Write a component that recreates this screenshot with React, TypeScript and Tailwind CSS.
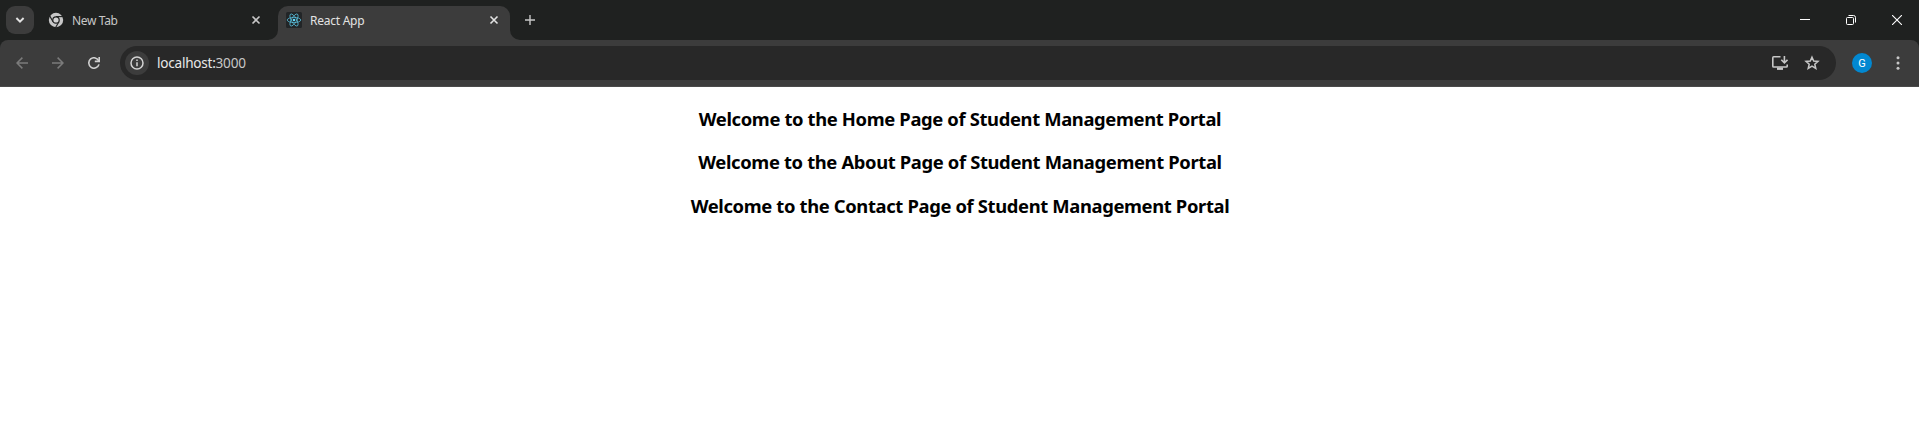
import React from "react";

type IconProps = { className?: string };

const CloseIcon = ({ className }: IconProps) => (
  <svg className={className} width="10" height="10" viewBox="0 0 10 10" fill="none" stroke="currentColor" strokeWidth="1.6">
    <path d="M1.5 1.5l7 7M8.5 1.5l-7 7" />
  </svg>
);

const ChromeIcon = () => (
  <svg width="16" height="16" viewBox="0 0 16 16">
    <circle cx="8" cy="8" r="7.2" fill="#c7c7c7" />
    <circle cx="8" cy="8" r="3.8" fill="#1f2120" />
    <g stroke="#1f2120" strokeWidth="1.1">
      <path d="M8 4.6h7" />
      <path d="M10.95 9.7L7.45 15.76" />
      <path d="M5.05 9.7L1.55 3.64" />
    </g>
    <circle cx="8" cy="8" r="2.6" fill="#d3d3d3" />
  </svg>
);

const ReactIcon = () => (
  <svg width="16" height="16" viewBox="0 0 16 16">
    <rect width="16" height="16" rx="1.5" fill="#222527" />
    <g fill="none" stroke="#58bfdc" strokeWidth="0.75">
      <ellipse cx="8" cy="8" rx="6.8" ry="2.6" />
      <ellipse cx="8" cy="8" rx="6.8" ry="2.6" transform="rotate(60 8 8)" />
      <ellipse cx="8" cy="8" rx="6.8" ry="2.6" transform="rotate(120 8 8)" />
    </g>
    <circle cx="8" cy="8" r="1.3" fill="#61dafb" />
  </svg>
);

const Arrow = ({ className }: IconProps) => (
  <svg className={className} width="12" height="12" viewBox="0 0 12 12" fill="none" stroke="#7b7b7b" strokeWidth="1.5">
    <path d="M12 6H1.2M6.4 0.6L1 6L6.4 11.4" />
  </svg>
);

const ReloadIcon = () => (
  <svg width="12" height="12" viewBox="0 0 12 12" fill="none" stroke="#d0d0d0" strokeWidth="1.6">
    <path d="M10.8 4A5.2 5.2 0 1 0 11 7.4" />
    <path d="M11.2 0V4.4H6.8" />
  </svg>
);

const TabCurve = ({ className }: IconProps) => (
  <svg className={className} width="10" height="10" viewBox="0 0 10 10">
    <path d="M10 0V10H0A10 10 0 0 0 10 0Z" fill="#3c3c3c" />
  </svg>
);

const pages = ["Home", "About", "Contact"];

export default function App() {
  return (
    <div className="flex h-[439px] w-full flex-col overflow-hidden bg-white font-['Noto_Sans',sans-serif]">
      <header className="bg-[#1f2120]">
        <div className="flex h-10 items-start">
          <button className="mt-1.5 ml-1.5 flex h-7 w-7 items-center justify-center rounded-[9px] bg-[#3c3c3c]">
            <svg width="10" height="8" viewBox="0 0 10 8" fill="none" stroke="#e3e3e3" strokeWidth="1.9">
              <path d="M1.4 2L5 5.6L8.6 2" />
            </svg>
          </button>
          <div className="ml-[14px] flex h-10 w-[220px] items-center">
            <ChromeIcon />
            <span className="mt-0.5 ml-2 text-[12px] leading-4 tracking-[-0.35px] text-[#c7c7c7]">New Tab</span>
            <CloseIcon className="mr-[7px] ml-auto text-[#c7c7c7]" />
          </div>
          <TabCurve className="mt-[30px]" />
          <div className="mt-1.5 flex h-[34px] w-[232px] items-start rounded-t-[10px] bg-[#3c3c3c] pt-1.5 pl-2">
            <ReactIcon />
            <span className="mt-px ml-2 text-[12px] leading-4 tracking-[-0.25px] text-[#e3e3e3]">React App</span>
            <CloseIcon className="mt-[3px] mr-[11px] ml-auto text-[#e3e3e3]" />
          </div>
          <TabCurve className="mt-[30px] -scale-x-100" />
          <svg className="mt-[15px] ml-[5px]" width="10" height="10" viewBox="0 0 10 10" stroke="#c7c7c7" strokeWidth="1.4">
            <path d="M5 0v10M0 5h10" />
          </svg>
          <div className="mt-[15px] mr-[17px] ml-auto flex items-center gap-[36px] text-white">
            <svg width="10" height="10" viewBox="0 0 10 10" stroke="currentColor"><path d="M0 4.5h10" /></svg>
            <svg width="10" height="10" viewBox="0 0 10 10" fill="none" stroke="currentColor">
              <rect x="0.5" y="2.5" width="7" height="7" rx="1" />
              <path d="M2.5 0.5H7.5Q9.5 0.5 9.5 2.5V7.5" />
            </svg>
            <svg width="10" height="10" viewBox="0 0 10 10" stroke="currentColor" strokeWidth="1.1"><path d="M0 0l10 10M10 0L0 10" /></svg>
          </div>
        </div>

        <div className="flex h-[47px] items-start rounded-t-lg border-b border-[#4a4a4a] bg-[#3c3c3c] pt-1.5">
          <div className="flex h-[34px] w-[120px] items-center gap-6 pl-4">
            <Arrow />
            <Arrow className="rotate-180" />
            <ReloadIcon />
          </div>
          <div className="flex h-[34px] flex-1 items-center rounded-full bg-[#282828] pl-[5px]">
            <span className="flex h-6 w-6 items-center justify-center rounded-full bg-[#3c3c3c]">
              <svg width="14" height="14" viewBox="0 0 14 14" fill="none" stroke="#d3d3d3" strokeWidth="1.5">
                <circle cx="7" cy="7" r="6" />
                <path d="M7 6.2v4M7 3.6v1.5" />
              </svg>
            </span>
            <span className="ml-2 text-[13.6px] leading-5 tracking-[-0.25px] text-[#c7c7c7]">
              <span className="text-[#e8e8e8]">localhost:</span>3000
            </span>
            <svg className="ml-auto" width="16" height="14" viewBox="0 0 16 14" fill="none" stroke="#c7c7c7" strokeWidth="1.6">
              <path d="M8.5 0.8H1.7Q0.8 0.8 0.8 1.7V10.2Q0.8 11 1.7 11H14.3Q15.2 11 15.2 10.2V8.5" />
              <path d="M12.4 0V6.6M9.3 3.8L12.4 6.9L15.5 3.8" />
              <path d="M5 12.7h6" strokeWidth="2.4" />
            </svg>
            <svg className="mr-4 ml-4" width="16" height="16" viewBox="0 0 16 16" fill="none" stroke="#c7c7c7" strokeWidth="1.5">
              <path d="M8 2.2L9.7 6L14 6.4L10.8 9.2L11.8 13.5L8 11.2L4.2 13.5L5.2 9.2L2 6.4L6.3 6Z" />
            </svg>
          </div>
          <div className="flex h-[34px] w-[83px] items-center pl-4">
            <span className="flex h-5 w-5 items-center justify-center rounded-full bg-[#0288d1] font-['Roboto',sans-serif] text-[11px] leading-none text-white">G</span>
            <svg className="ml-6" width="4" height="14" viewBox="0 0 4 14" fill="#c7c7c7">
              <circle cx="2" cy="1.7" r="1.5" /><circle cx="2" cy="7" r="1.5" /><circle cx="2" cy="12.3" r="1.5" />
            </svg>
          </div>
        </div>
      </header>

      <main className="flex flex-col items-center gap-[18.72px] pt-[18.72px] pl-px text-black">
        {pages.map((name) => (
          <h3 key={name} className="text-[18.4px] leading-[25px] font-bold tracking-[-0.36px] whitespace-nowrap">
            Welcome to the {name} Page of Student Management Portal
          </h3>
        ))}
      </main>
    </div>
  );
}
